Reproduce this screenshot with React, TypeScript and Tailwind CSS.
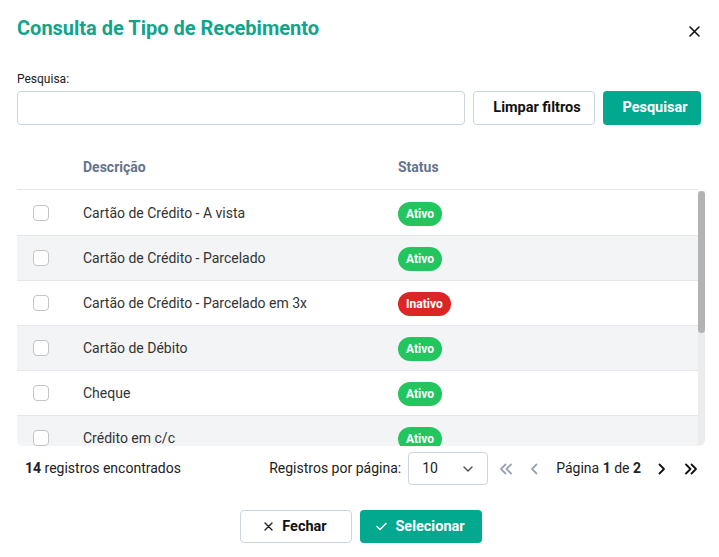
import React from "react";

const rows = [
  { d: "Cartão de Crédito - A vista", a: true },
  { d: "Cartão de Crédito - Parcelado", a: true },
  { d: "Cartão de Crédito - Parcelado em 3x", a: false },
  { d: "Cartão de Débito", a: true },
  { d: "Cheque", a: true },
  { d: "Crédito em c/c", a: true },
  { d: "Depósito Bancário", a: true },
  { d: "Dinheiro", a: true },
  { d: "Duplicata", a: true },
  { d: "PIX", a: true },
];

function Chevron({ dir, double, color }: { dir: "l" | "r"; double?: boolean; color: string }) {
  return (
    <svg width="14" height="14" viewBox="0 0 14 14" fill="none" stroke={color} strokeWidth="1.8" strokeLinecap="round" strokeLinejoin="round">
      {double ? (
        dir === "l" ? (
          <>
            <path d="M6.5 2.5 L2 7 L6.5 11.5" />
            <path d="M12 2.5 L7.5 7 L12 11.5" />
          </>
        ) : (
          <>
            <path d="M2 2.5 L6.5 7 L2 11.5" />
            <path d="M7.5 2.5 L12 7 L7.5 11.5" />
          </>
        )
      ) : dir === "l" ? (
        <path d="M9.5 2.5 L5 7 L9.5 11.5" />
      ) : (
        <path d="M4.5 2.5 L9 7 L4.5 11.5" />
      )}
    </svg>
  );
}

export default function App() {
  return (
    <div className="w-[719px] h-[557px] bg-white text-[#222] overflow-hidden" style={{ fontFamily: "Roboto, 'Noto Sans', sans-serif" }}>
      {/* Header */}
      <div className="flex items-center justify-between pl-[17px] pr-[19px] pt-[16px] h-[40px]">
        <h1 className="text-[20px] leading-[24px] font-bold text-[#10a58a]">Consulta de Tipo de Recebimento</h1>
        <svg width="11" height="11" viewBox="0 0 11 11" className="mt-[6px]" stroke="#111" strokeWidth="1.6" strokeLinecap="round">
          <path d="M1 1 L10 10 M10 1 L1 10" />
        </svg>
      </div>

      {/* Search */}
      <div className="px-[17px] mt-[32px]">
        <div className="text-[12px] leading-[14px] text-[#222] mb-[5px]">Pesquisa:</div>
        <div className="flex gap-[8px]">
          <input className="w-[448px] h-[34px] border border-[#cbd5e1] rounded-[4px] outline-none px-2" />
          <button className="w-[122px] h-[34px] border border-[#cbd5e1] rounded-[4px] bg-white pl-[6px] text-[14.5px] font-bold text-[#111]">Limpar filtros</button>
          <button className="w-[98px] h-[34px] rounded-[4px] bg-[#02a98f] pl-[6px] text-[14.5px] font-bold text-white">Pesquisar</button>
        </div>
      </div>

      {/* Table */}
      <div className="ml-[17px] w-[688px] mt-[20px]">
        <div className="grid grid-cols-[66px_315px_1fr] w-[681px] h-[45px] items-center border-b border-[#e5e7eb] text-[14px] font-bold text-[#64748b]">
          <div />
          <div>Descrição</div>
          <div>Status</div>
        </div>
        <div className="flex h-[255px] overflow-hidden rounded-b-[6px] mt-[1px]">
          <div className="w-[681px] h-[255px] overflow-hidden">
            {rows.map((r, i) => (
              <div
                key={i}
                className={`grid grid-cols-[66px_315px_1fr] h-[45px] items-center border-b border-[#e5e7eb] ${i % 2 === 1 ? "bg-[#f3f4f6]" : "bg-white"}`}
              >
                <div className="pl-[16px] flex">
                  <span className="w-[16px] h-[16px] rounded-[4px] border-[1.5px] border-[#c4c4c4] bg-white" />
                </div>
                <div className="text-[14px] text-[#333]">{r.d}</div>
                <div>
                  {r.a ? (
                    <span className="inline-flex items-center h-[24px] px-[8px] rounded-full bg-[#22c55e] text-white text-[12px] font-bold">Ativo</span>
                  ) : (
                    <span className="inline-flex items-center h-[24px] px-[8px] rounded-full bg-[#dc2626] text-white text-[12px] font-bold">Inativo</span>
                  )}
                </div>
              </div>
            ))}
          </div>
          <div className="w-[7px] h-[255px] bg-[#ececec] rounded-br-[6px]">
            <div className="h-[142px] bg-[#b3b3b3] rounded-[4px]" />
          </div>
        </div>
      </div>

      {/* Footer */}
      <div className="flex items-center justify-between pl-[25px] pr-[21px] mt-[6px] h-[33px]">
        <div className="text-[14px] text-[#222]">
          <span className="font-bold">14</span> registros encontrados
        </div>
        <div className="flex items-center">
          <span className="text-[14px] text-[#222] mr-[7px]">Registros por página:</span>
          <div className="w-[80px] h-[33px] border border-[#cbd5e1] rounded-[4px] flex items-center justify-between pl-[13px] pr-[13px] text-[14px] text-[#222]">
            <span>10</span>
            <svg width="12" height="12" viewBox="0 0 12 12" fill="none" stroke="#555" strokeWidth="1.5" strokeLinecap="round" strokeLinejoin="round">
              <path d="M2 4 L6 8 L10 4" />
            </svg>
          </div>
          <div className="ml-[11px] flex items-center">
            <Chevron dir="l" double color="#9aa3b2" />
            <span className="ml-[14px]"><Chevron dir="l" color="#9aa3b2" /></span>
            <span className="ml-[15px] text-[14px] text-[#222]">
              Página <b>1</b> de <b>2</b>
            </span>
            <span className="ml-[14px]"><Chevron dir="r" color="#111" /></span>
            <span className="ml-[15px]"><Chevron dir="r" double color="#111" /></span>
          </div>
        </div>
      </div>

      {/* Actions */}
      <div className="flex justify-center gap-[8px] mt-[25px] pl-[2px]">
        <button className="w-[112px] h-[33px] border border-[#cbd5e1] rounded-[4px] bg-white flex items-center justify-center gap-[9px] text-[14.5px] font-bold text-[#111]">
          <svg width="9" height="9" viewBox="0 0 9 9" stroke="#222" strokeWidth="1.4" strokeLinecap="round">
            <path d="M1 1 L8 8 M8 1 L1 8" />
          </svg>
          Fechar
        </button>
        <button className="w-[122px] h-[33px] rounded-[4px] bg-[#02a98f] flex items-center justify-center gap-[8px] text-[14.5px] font-bold text-white">
          <svg width="11" height="9" viewBox="0 0 11 9" fill="none" stroke="#fff" strokeWidth="1.5" strokeLinecap="round" strokeLinejoin="round">
            <path d="M1 4.5 L4 7.5 L10 1.5" />
          </svg>
          Selecionar
        </button>
      </div>
    </div>
  );
}
